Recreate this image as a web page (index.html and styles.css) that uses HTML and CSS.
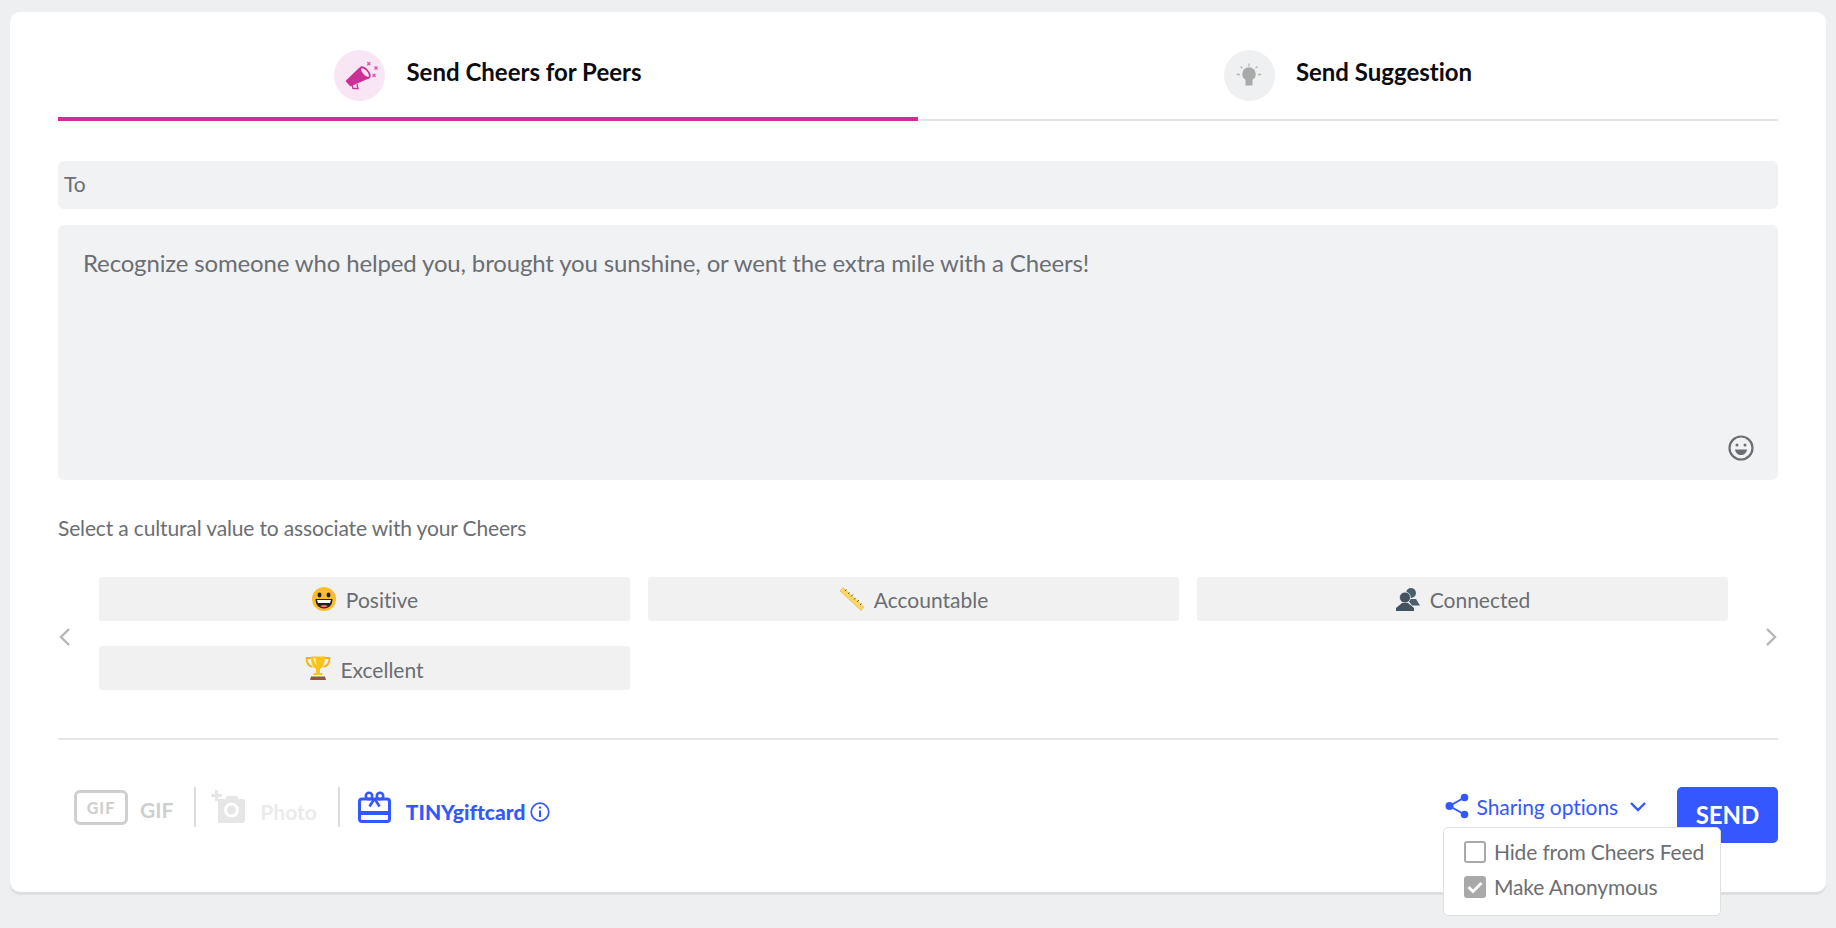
FILE: index.html
```html
<!DOCTYPE html>
<html lang="en">
<head>
<meta charset="utf-8">
<title>Send Cheers</title>
<link rel="stylesheet" href="styles.css">
</head>
<body>
<main class="card">
  <nav class="tabs">
    <div class="tab tab-active">
      <span class="tab-icon tab-icon-pink">
        <svg class="over" width="30" height="30" viewBox="0 0 30 30"><path d="M1.500 20 14.500 7.500l9.500 9-18.500 8z" fill="#cc2f96" stroke="#cc2f96" stroke-width="1.500" stroke-linejoin="round"/><ellipse cx="20" cy="11.500" rx="3" ry="6.500" transform="rotate(-42 20 11.500)" fill="#f9e6f4" stroke="#cc2f96" stroke-width="1.800"/><path d="M7 24l1 3.500h5l-1-4.500" fill="none" stroke="#cc2f96" stroke-width="1.300"/><path d="M22.300 1.300l3 3m0-3l-3 3M29.500 5.500l3 3m0-3l-3 3M27.500 13l3 3m0-3l-3 3" stroke="#dc55ad" stroke-width="1.300"/></svg>
      </span>
      <span class="tab-label">Send Cheers for Peers</span>
    </div>
    <div class="tab">
      <span class="tab-icon tab-icon-gray">
        <svg width="30" height="30" viewBox="0 0 30 30"><circle cx="15" cy="13" r="6.800" fill="#a9a9a9"/><path d="M11.500 17h7v7.500h-7z" fill="#a9a9a9"/><path d="M15 2.500v3M6.500 5.500l2 1.700M23.500 5.500l-2 1.700M2.800 13.500H6M24 13.500h3.200" stroke="#b5b5b5" stroke-width="1.300"/></svg>
      </span>
      <span class="tab-label">Send Suggestion</span>
    </div>
  </nav>

  <div class="to-field">To</div>

  <div class="message">
    <span>Recognize someone who helped you, brought you sunshine, or went the extra mile with a Cheers!</span>
    <svg class="smile" width="28" height="28" viewBox="0 0 28 28"><circle cx="14" cy="14" r="11.500" fill="none" stroke="#6b6e72" stroke-width="2.200"/><circle cx="10" cy="11" r="1.500" fill="#6b6e72"/><circle cx="18" cy="11" r="1.500" fill="#6b6e72"/><path d="M8 15.500h12c-.5 3.500-3 5.500-6 5.500s-5.500-2-6-5.500z" fill="#6b6e72"/></svg>
  </div>

  <p class="value-label">Select a cultural value to associate with your Cheers</p>

  <section class="values">
    <svg class="arrow" width="14" height="20" viewBox="0 0 14 20"><path d="M11 2 3 10l8 8" fill="none" stroke="#b4b6b9" stroke-width="2.400"/></svg>
    <div class="chip-grid">
      <div class="chip">
        <svg width="26" height="26" viewBox="0 0 26 26"><circle cx="13" cy="13" r="12" fill="#fbbd2e"/><ellipse cx="8.500" cy="9" rx="2" ry="2.400" fill="#222"/><ellipse cx="17.500" cy="9" rx="2" ry="2.400" fill="#222"/><path d="M4.500 13h17c0 6-3.500 9.500-8.500 9.500S4.500 19 4.500 13z" fill="#222"/><path d="M6 14h14l-1 3H7z" fill="#fff"/><path d="M9 20c2-1.500 6-1.500 8 0-2 1.800-6 1.800-8 0z" fill="#e8766b"/></svg>
        <span>Positive</span>
      </div>
      <div class="chip">
        <svg width="26" height="26" viewBox="0 0 26 26"><path d="M4 1.500 25 21l-3 3.500L1 5z" fill="#f9d562" stroke="#e5b33c" stroke-width=".6"/><path d="M6 5l1.500-1.500M9 8l1.500-1.500M12 10.500l2-2M15 13.500l1.500-1.500M18 16l2-2M21 19l1.500-1.500" stroke="#6c5a2b" stroke-width="1"/></svg>
        <span>Accountable</span>
      </div>
      <div class="chip">
        <svg width="26" height="26" viewBox="0 0 26 26"><circle cx="16" cy="7" r="5" fill="#4b5f6d"/><path d="M12 13h9l4 6.500H17z" fill="#4b5f6d"/><circle cx="10" cy="11.500" r="5.500" fill="#43535f" stroke="#f1f1f1" stroke-width=".8"/><path d="M7 17h6l6 5v3H1v-3z" fill="#43535f"/></svg>
        <span>Connected</span>
      </div>
      <div class="chip chip-low">
        <svg width="26" height="26" viewBox="0 0 26 26"><path d="M6 3H1.500c0 5 2 8 6 9M20 3h4.500c0 5-2 8-6 9" fill="none" stroke="#f5b111" stroke-width="1.800"/><path d="M6 1.500h14c0 7-2 11-5 12.500v4h2.500v2h-9v-2H11v-4C8 12.500 6 8.500 6 1.500z" fill="#fcc419"/><path d="M8.500 3h2c0 3 .5 5 1.500 7-2-1-3.500-4-3.500-7z" fill="#fff3b8"/><path d="M6 21.500h14l1 3.500H5z" fill="#8c5a3a"/></svg>
        <span>Excellent</span>
      </div>
    </div>
    <svg class="arrow arrow-next" width="14" height="20" viewBox="0 0 14 20"><path d="M3 2l8 8-8 8" fill="none" stroke="#b4b6b9" stroke-width="2.400"/></svg>
  </section>

  <footer class="actions">
    <div class="tools">
      <div class="tool tool-gif">
        <span class="gif-box">GIF</span>
        <span class="gif-text">GIF</span>
      </div>
      <div class="tool tool-photo">
        <svg width="38" height="34" viewBox="0 0 38 34"><path d="M7 9h7l2-3h10l2 3h4a3 3 0 0 1 2 2v19a3 3 0 0 1-3 3H8a1 1 0 0 1-1-1z" fill="#e6e6e6"/><circle cx="20.500" cy="20" r="7.500" fill="#fff"/><circle cx="20.500" cy="20" r="4.500" fill="#e6e6e6"/><path d="M5.500 0v11M0 5.500h11" stroke="#e6e6e6" stroke-width="3" /></svg>
        <span>Photo</span>
      </div>
      <div class="tool tool-gift">
        <svg width="33" height="32" viewBox="0 0 33 32"><rect x="1.500" y="8" width="30" height="22.500" rx="2.500" fill="#fff" stroke="#3457ff" stroke-width="3"/><path d="M2 20h29v4H2z" fill="#3457ff"/><circle cx="11" cy="5" r="3.200" fill="none" stroke="#3457ff" stroke-width="2.600"/><circle cx="22" cy="5" r="3.200" fill="none" stroke="#3457ff" stroke-width="2.600"/><path d="M16.500 7.500l-5 8M16.500 7.500l5 8" stroke="#3457ff" stroke-width="2.600"/></svg>
        <strong>TINYgiftcard</strong>
        <svg width="20" height="20" viewBox="0 0 20 20"><circle cx="10" cy="10" r="8.800" fill="none" stroke="#3457ff" stroke-width="1.700"/><path d="M10 8.500V15" stroke="#3457ff" stroke-width="2"/><circle cx="10" cy="5.600" r="1.200" fill="#3457ff"/></svg>
      </div>
    </div>

    <div class="send-area">
      <div class="sharing">
        <svg width="24" height="26" viewBox="0 0 24 26"><circle cx="4.500" cy="13" r="4" fill="#3457ff"/><circle cx="19.500" cy="4.500" r="3.800" fill="#3457ff"/><circle cx="19.500" cy="21.500" r="3.800" fill="#3457ff"/><path d="M19.500 4.500l-15 8.500 15 8.500" fill="none" stroke="#3457ff" stroke-width="2"/></svg>
        <span>Sharing options</span>
        <svg class="chev" width="18" height="11" viewBox="0 0 18 11"><path d="M2 2l7 7 7-7" fill="none" stroke="#3457ff" stroke-width="2.400"/></svg>
      </div>
      <button class="send">SEND</button>
      <div class="menu">
        <div class="menu-row"><span class="box"></span>Hide from Cheers Feed</div>
        <div class="menu-row"><span class="box box-on"><svg width="22" height="22" viewBox="0 0 22 22"><path d="M4.500 11l4.500 4.500 8.500-8.500" fill="none" stroke="#fff" stroke-width="2.800"/></svg></span>Make Anonymous</div>
      </div>
    </div>
  </footer>
</main>
</body>
</html>
```

FILE: styles.css
```css
* { box-sizing: border-box; }
html, body { height: 100%; }
body {
  margin: 0;
  padding: 12px 10px 0;
  background: #eeeff1;
  font-family: Lato, "Open Sans", sans-serif;
  font-variant-ligatures: none;
  color: #6b6e72;
  overflow: hidden;
}
.card {
  height: 880px;
  padding: 0 48px;
  background: #fff;
  border-radius: 10px;
  box-shadow: 0 3px 1px rgba(0, 0, 0, .07);
}
.tabs {
  display: grid;
  grid-template-columns: 860px 860px;
  height: 109px;
  border-bottom: 2px solid #e4e5e7;
}
.tab {
  display: flex;
  align-items: center;
  justify-content: center;
  gap: 21px;
  height: 109px;
  padding: 18px 0 0;
  color: #0c0c0f;
}
.tab-active { padding-bottom: 0; border-bottom: 4px solid #cc2f96; }
.tab-active .tab-icon { margin-bottom: -4px; }
.tab-active .tab-label { margin-bottom: 0; }
.tab-label { margin-bottom: 4px; padding-bottom: 4px; font-size: 24px; font-weight: 700; }
.tab-icon {
  display: flex;
  align-items: center;
  justify-content: center;
  width: 51px;
  height: 51px;
  border-radius: 50%;
}
.over { overflow: visible; }
.tab-icon-pink { background: #f9e6f4; }
.tab-icon-gray { background: #eff0f1; }
.to-field {
  height: 48px;
  margin-top: 40px;
  padding: 0 6px 3px;
  display: flex;
  align-items: center;
  background: #f1f2f4;
  border-radius: 6px;
  font-size: 21px;
  letter-spacing: -.15px;
}
.message {
  position: relative;
  height: 255px;
  margin-top: 16px;
  padding: 23px 25px;
  background: #f1f2f4;
  border-radius: 6px;
  font-size: 24px;
  line-height: 29px;
  letter-spacing: -.15px;
}
.smile { position: absolute; right: 23px; bottom: 18px; }
.value-label { margin: 36px 0 0; font-size: 21px; line-height: 24px; letter-spacing: -.15px; }
.values {
  display: flex;
  align-items: center;
  gap: 27px;
  margin-top: 37px;
}
.arrow { flex: none; margin-top: 6px; }
.arrow-next { margin-left: auto; }
.chip-grid {
  display: grid;
  grid-template-columns: repeat(3, 531px);
  grid-auto-rows: 44px;
  gap: 25px 18px;
}
.chip {
  display: flex;
  align-items: center;
  justify-content: center;
  gap: 9px;
  background: #f1f1f1;
  border-radius: 3px;
  font-size: 21px;
}
.chip-low span { padding-top: 2px; }
.actions {
  display: flex;
  justify-content: space-between;
  align-items: flex-start;
  height: 100px;
  margin-top: 48px;
  padding-top: 47px;
  border-top: 2px solid #e4e5e7;
}
.tools { display: flex; align-items: center; padding-left: 16px; }
.tool {
  display: flex;
  align-items: center;
  height: 40px;
  font-size: 21px;
  font-weight: 700;
}
.tool-gif { gap: 12px; padding-right: 21px; color: #cfcfcf; border-right: 2px solid #dddddd; }
.gif-text { padding-top: 4px; }
.gif-box {
  width: 54px;
  height: 35px;
  display: flex;
  align-items: center;
  justify-content: center;
  border: 3px solid #cfcfcf;
  border-radius: 6px;
  font-size: 16px;
  font-weight: 900;
  letter-spacing: 1px;
}
.tool-photo { gap: 11px; padding: 0 21px 0 15px; color: #ebebeb; border-right: 2px solid #dddddd; }
.tool-photo span { padding-top: 9px; }
.tool-gift { gap: 5px; padding-left: 18px; color: #3457ff; }
.tool-gift strong { margin-left: 10px; padding-top: 9px; }
.tool-gift svg:last-child { margin-top: 9px; }
.send-area { position: relative; display: flex; align-items: flex-start; }
.sharing {
  display: flex;
  align-items: center;
  gap: 8px;
  height: 44px;
  margin-top: -3px;
  margin-right: 30px;
  color: #3457ff;
  font-size: 21px;
  letter-spacing: -.1px;
}
.chev { margin-left: 3px; }
.send {
  width: 101px;
  height: 56px;
  padding: 0 0 2px;
  border: 0;
  border-radius: 5px;
  background: #3457ff;
  color: #fff;
  font-family: inherit;
  font-size: 24px;
  font-weight: 700;
}
.menu {
  position: absolute;
  top: 40px;
  right: 57px;
  width: 278px;
  height: 89px;
  padding: 6px 20px;
  background: #fff;
  border: 1px solid #dfe0e2;
  border-radius: 5px;
  font-size: 21px;
  letter-spacing: -.15px;
}
.menu-row { display: flex; align-items: center; gap: 8px; height: 35px; white-space: nowrap; }
.box {
  flex: none;
  width: 22px;
  height: 22px;
  border: 2px solid #a9a9a9;
  border-radius: 3px;
}
.box-on { border: 0; background: #a9a9a9; }
.box-on svg { display: block; }
```
